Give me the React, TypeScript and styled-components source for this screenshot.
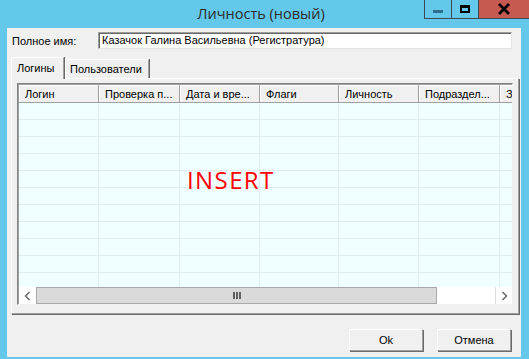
import styled, { createGlobalStyle } from 'styled-components';

const GlobalStyle = createGlobalStyle`
  html, body {
    margin: 0;
    padding: 0;
    background: #63c8ea;
  }
  * {
    box-sizing: border-box;
  }
`;

const COLUMNS = [
  { title: 'Логин', width: 80 },
  { title: 'Проверка п...', width: 81 },
  { title: 'Дата и вре...', width: 80 },
  { title: 'Флаги', width: 79 },
  { title: 'Личность', width: 80 },
  { title: 'Подраздел...', width: 81 },
  { title: 'З', width: 40 },
];

const ROW_COUNT = 11;

export default function App() {
  return (
    <>
      <GlobalStyle />
      <Window>
        <TitleBar>
          <Title>Личность (новый)</Title>
          <CaptionButtons>
            <CaptionButton>
              <MinGlyph />
            </CaptionButton>
            <CaptionButton>
              <MaxGlyph />
            </CaptionButton>
            <CloseButton>
              <svg width="14" height="12" viewBox="0 0 14 12">
                <path d="M2 1 L12 11 M12 1 L2 11" stroke="#000" strokeWidth="2.8" />
              </svg>
            </CloseButton>
          </CaptionButtons>
        </TitleBar>

        <Client>
          <NameRow>
            <Label>Полное имя:</Label>
            <TextBox>Казачок Галина Васильевна (Регистратура)</TextBox>
          </NameRow>

          <TabStrip>
            <Tab active $w={53}>Логины</Tab>
            <Tab $w={84}>Пользователи</Tab>
          </TabStrip>

          <TabPanel>
            <ListView>
              <HeaderRow>
                {COLUMNS.map(col => (
                  <HeaderCell key={col.title} $w={col.width}>
                    {col.title}
                  </HeaderCell>
                ))}
              </HeaderRow>
              <Body>
                {Array.from({ length: ROW_COUNT }).map((_, i) => (
                  <Row key={i}>
                    {COLUMNS.map(col => (
                      <Cell key={col.title} $w={col.width} />
                    ))}
                  </Row>
                ))}
                <InsertMark>INSERT</InsertMark>
              </Body>
              <HScroll>
                <ArrowButton>
                  <svg width="7" height="10" viewBox="0 0 7 10">
                    <path d="M5.5 1 L1.5 5 L5.5 9" stroke="#606060" strokeWidth="1.4" fill="none" />
                  </svg>
                </ArrowButton>
                <Thumb>
                  <Grip>
                    <span />
                    <span />
                    <span />
                  </Grip>
                </Thumb>
                <Track />
                <ArrowButton right>
                  <svg width="7" height="10" viewBox="0 0 7 10">
                    <path d="M1.5 1 L5.5 5 L1.5 9" stroke="#606060" strokeWidth="1.4" fill="none" />
                  </svg>
                </ArrowButton>
              </HScroll>
            </ListView>
          </TabPanel>

          <Footer>
            <PushButton>Ok</PushButton>
            <PushButton>Отмена</PushButton>
          </Footer>
        </Client>
      </Window>
    </>
  );
}

const Window = styled.div`
  width: 529px;
  height: 359px;
  background: #63c8ea;
  display: flex;
  flex-direction: column;
  font-family: 'Liberation Sans', Arial, sans-serif;
  font-size: 11px;
  color: #000;
`;

const TitleBar = styled.div`
  height: 28px;
  display: flex;
  align-items: flex-start;
`;

const Title = styled.div`
  flex: 1;
  height: 28px;
  padding-left: 98px;
  display: flex;
  align-items: center;
  justify-content: center;
  font-family: 'Open Sans', 'Noto Sans', sans-serif;
  font-size: 14.5px;
  color: #2b2b2b;
  padding-bottom: 2px;
`;

const CaptionButtons = styled.div`
  display: flex;
  height: 19px;
  border: 1px solid #3d4a52;
  border-top: none;
  border-right: none;
`;

const CaptionButton = styled.div`
  width: 27px;
  height: 18px;
  display: flex;
  align-items: center;
  justify-content: center;
  border-right: 1px solid #3d4a52;
`;

const CloseButton = styled.div`
  width: 50px;
  height: 18px;
  background: #c75a50;
  display: flex;
  align-items: center;
  justify-content: center;
`;

const MinGlyph = styled.div`
  width: 10px;
  height: 3px;
  margin-top: 4px;
  background: #2d6f8c;
`;

const MaxGlyph = styled.div`
  width: 10px;
  height: 8px;
  border: 2px solid #000;
  border-top-width: 3px;
`;

const Client = styled.div`
  flex: 1;
  margin: 0 8px 2px 7px;
  background: #f0f0f0;
  display: flex;
  flex-direction: column;
  padding: 4px 2px 0 4px;
`;

const NameRow = styled.div`
  display: flex;
  align-items: center;
  height: 17px;
`;

const Label = styled.div`
  width: 87px;
  padding-left: 1px;
`;

const TextBox = styled.div`
  width: 414px;
  height: 17px;
  background: #fff;
  border: 1px solid;
  border-color: #9c9c9c #e3e3e3 #e3e3e3 #9c9c9c;
  box-shadow: inset 1px 1px 0 #696969;
  padding: 1px 0 0 3px;
  line-height: 13px;
  white-space: nowrap;
`;

const TabStrip = styled.div`
  display: flex;
  align-items: flex-end;
  height: 22px;
  margin-top: 7px;
  position: relative;
  z-index: 1;
`;

const Tab = styled.div<{ active?: boolean; $w: number }>`
  width: ${({ $w }) => $w}px;
  height: ${({ active }) => (active ? 22 : 19)}px;
  padding: ${({ active }) => (active ? '3px 0 0 5px' : '2px 0 0 4px')};
  background: #f0f0f0;
  border-top: 1px solid #fff;
  border-left: 1px solid #fff;
  border-right: 1px solid #a0a0a0;
  box-shadow: 1px 0 0 #696969;
  margin-bottom: ${({ active }) => (active ? '-1px' : '0')};
  margin-left: ${({ active }) => (active ? '0' : '1px')};
  white-space: nowrap;
  line-height: 15px;
`;

const TabPanel = styled.div`
  width: 508px;
  height: 236px;
  border-top: 1px solid #fff;
  border-left: 1px solid #fff;
  border-right: 1px solid #a0a0a0;
  border-bottom: 1px solid #a0a0a0;
  box-shadow: 1px 1px 0 #696969;
  padding: 4px 5px 8px 5px;
  display: flex;
`;

const ListView = styled.div`
  flex: 1;
  display: flex;
  flex-direction: column;
  border: 1px solid;
  border-color: #828282 #f0f0f0 #f0f0f0 #828282;
  box-shadow: inset 1px 1px 0 #a0a0a0;
  overflow: hidden;
  background: #f0ffff;
`;

const HeaderRow = styled.div`
  display: flex;
  height: 18px;
  background: #f0f0f0;
  border-bottom: 1px solid #a0a0a0;
  margin-left: 1px;
  margin-top: 1px;
`;

const HeaderCell = styled.div<{ $w: number }>`
  flex: 0 0 ${({ $w }) => $w}px;
  border-right: 1px solid #a0a0a0;
  box-shadow: inset 1px 1px 0 #fff;
  padding: 2px 0 0 6px;
  white-space: nowrap;
  overflow: hidden;
  line-height: 14px;
`;

const Body = styled.div`
  flex: 1;
  position: relative;
  overflow: hidden;
  margin-left: 1px;
`;

const Row = styled.div`
  display: flex;
  height: 17px;
  border-bottom: 1px solid #e0ecec;
`;

const Cell = styled.div<{ $w: number }>`
  flex: 0 0 ${({ $w }) => $w}px;
  border-right: 1px solid #e0ecec;
`;

const InsertMark = styled.div`
  position: absolute;
  left: 168px;
  top: 63px;
  font-family: 'Open Sans', 'Noto Sans', sans-serif;
  font-size: 24px;
  line-height: 28px;
  color: #ff0000;
  letter-spacing: 1.4px;
`;

const HScroll = styled.div`
  display: flex;
  height: 17px;
  margin-left: 1px;
  background: #fff;
`;

const ArrowButton = styled.div<{ right?: boolean }>`
  width: 17px;
  height: 17px;
  background: #fff;
  display: flex;
  align-items: center;
  justify-content: center;
  border-left: ${({ right }) => (right ? '1px solid #dadada' : 'none')};
`;

const Thumb = styled.div`
  width: 401px;
  background: #dadada;
  border: 1px solid #a8a8a8;
  display: flex;
  align-items: center;
  justify-content: center;
`;

const Grip = styled.div`
  display: flex;
  gap: 1px;
  span {
    width: 2px;
    height: 7px;
    background: #606060;
  }
`;

const Track = styled.div`
  flex: 1;
`;

const Footer = styled.div`
  display: flex;
  justify-content: flex-end;
  gap: 14px;
  padding: 15px 8px 0 0;
`;

const PushButton = styled.div`
  width: 74px;
  height: 22px;
  background: #f0f0f0;
  border-top: 1px solid #fff;
  border-left: 1px solid #fff;
  border-right: 1px solid #a0a0a0;
  border-bottom: 1px solid #a0a0a0;
  box-shadow: 1px 1px 0 #696969;
  display: flex;
  align-items: center;
  justify-content: center;
`;
